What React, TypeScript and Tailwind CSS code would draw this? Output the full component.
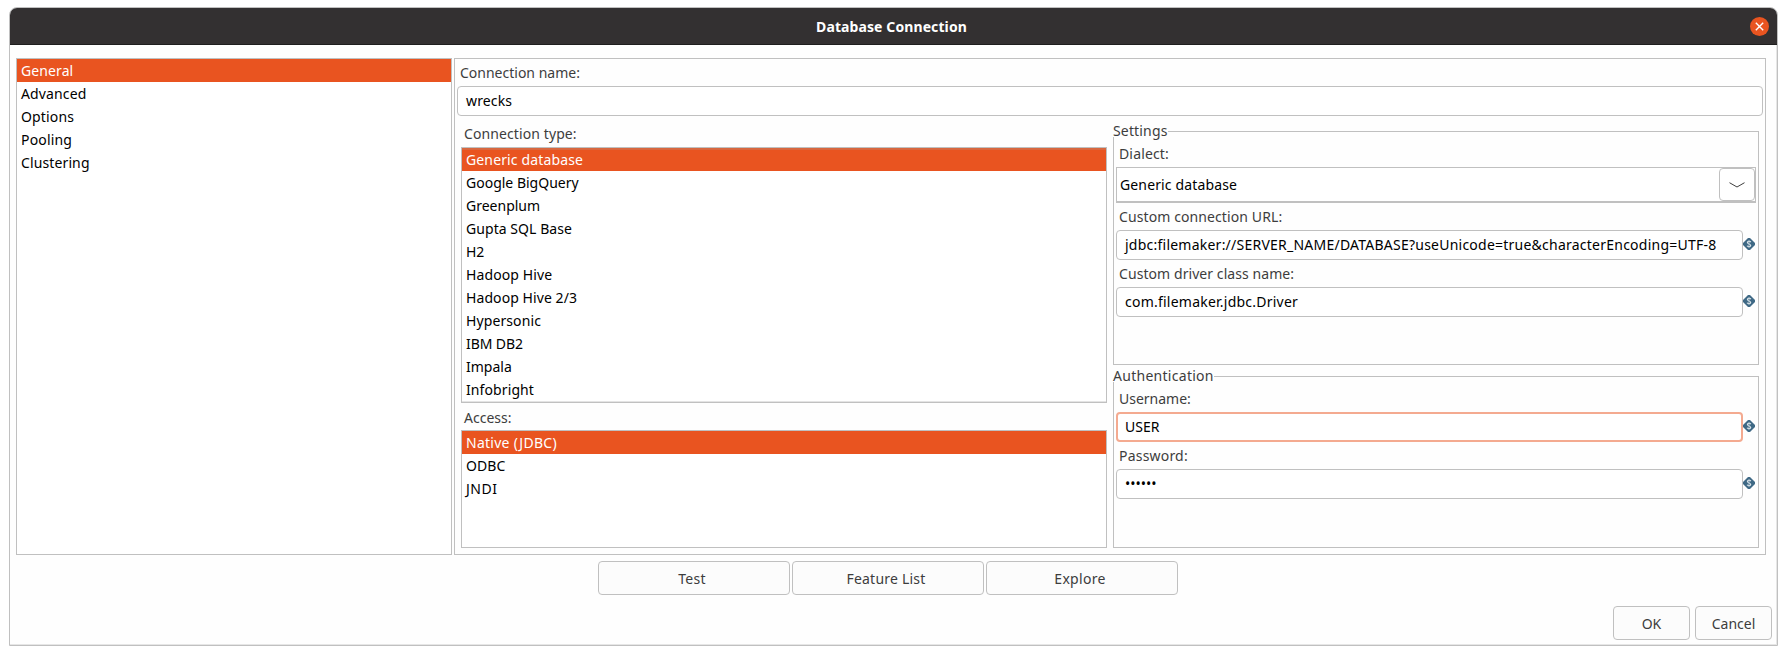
import React from "react";
import { clsx } from "clsx";

const databases: [string, string][] = [
  ["Generic database", "tracking-[0.14px]"],
  ["Google BigQuery", ""],
  ["Greenplum", ""],
  ["Gupta SQL Base", "tracking-[0.06px]"],
  ["H2", ""],
  ["Hadoop Hive", "tracking-[0.1px]"],
  ["Hadoop Hive 2/3", "tracking-[0.08px]"],
  ["Hypersonic", "tracking-[0.1px]"],
  ["IBM DB2", "tracking-[-0.1px]"],
  ["Impala", ""],
  ["Infobright", "tracking-[0.1px]"],
];
const sections: [string, string][] = [
  ["General", "tracking-[0.1px]"],
  ["Advanced", "tracking-[0.14px]"],
  ["Options", "tracking-[0.16px]"],
  ["Pooling", "tracking-[0.16px]"],
  ["Clustering", "tracking-[0.12px]"],
];
const access: [string, string][] = [
  ["Native (JDBC)", "tracking-[0.26px]"],
  ["ODBC", "tracking-[0.1px]"],
  ["JNDI", "tracking-[0.5px]"],
];

function List({ items, className, overflow }: { items: [string, string][]; className: string; overflow?: boolean }) {
  return (
    <ul className={clsx("border border-[#c0c0c0] bg-white", className)}>
      {items.map(([name, tracking], i) => (
        <li
          key={name}
          className={clsx(
            "h-[23px] pl-1 leading-[23px]",
            tracking,
            i === 0 ? "bg-[#e95420] text-white" : "text-black",
            i === 0 && overflow && "shadow-[inset_0_2px_0_#d8673f]",
          )}
        >
          {name}
        </li>
      ))}
      {overflow && <li className="h-px bg-[#e4e4e4]" />}
    </ul>
  );
}

function Label({ children, className }: { children: string; className?: string }) {
  return <div className={clsx("h-[22px] leading-[22px]", className)}>{children}</div>;
}

function Variable() {
  return (
    <svg width="12" height="12" viewBox="0 0 12 12" className="mt-2 shrink-0">
      <path d="M5 0H7L12 5V7L7 12H5L0 7V5Z" fill="#3f6985" />
      <path d="M7.8 4.1C7.2 3.2 4.4 3.1 4.4 4.6S7.7 5.9 7.7 7.4 4.6 8.8 4.1 7.8" fill="none" stroke="#dbe4ea" strokeWidth="1.2" />
      <path d="M6 2V10" stroke="#b4c5d0" strokeWidth="0.8" />
    </svg>
  );
}

function Field({ value, tracking, focused }: { value: string; tracking?: string; focused?: boolean }) {
  return (
    <div className="flex">
      <div
        className={clsx(
          "h-[30px] w-[627px] rounded-[4px] bg-white text-black",
          focused ? "border-2 border-[#f4aa90] pl-[7px] leading-[26px]" : "border border-[#c0c0c0] pl-2 leading-[28px]",
          tracking,
        )}
      >
        {value}
      </div>
      <Variable />
    </div>
  );
}

function Group({
  title,
  tracking,
  className,
  children,
}: {
  title: string;
  tracking: string;
  className: string;
  children: React.ReactNode;
}) {
  return (
    <section className={clsx("flex flex-col", className)}>
      <div className="flex h-[11px] items-center">
        <h2 className={clsx("pb-[2px] leading-[11px]", tracking)}>{title}</h2>
        <div className="h-px flex-1 bg-[#c0c0c0]" />
        <div className="h-[6px] w-px self-end bg-[#c0c0c0]" />
      </div>
      <div className="flex-1 border border-t-0 border-[#c0c0c0] pl-[2px]">{children}</div>
    </section>
  );
}

function Button({ children, className }: { children: string; className: string }) {
  return (
    <button className={clsx("h-[34px] rounded-[4px] border border-[#c0c0c0] bg-[#fcfcfc]", className)}>{children}</button>
  );
}

export default function App() {
  return (
    <div className="h-[655px] w-[1787px] bg-white pt-[7px] pl-[9px] font-['Noto_Sans','Open_Sans',sans-serif] text-[14px] whitespace-nowrap text-[#3d3d3d]">
      <main className="flex h-[639px] w-[1769px] flex-col rounded-t-[8px] border border-[#c0c0c0] bg-[#fefefe] shadow-[inset_-1px_-1px_0_#e6e6e6]">
        <header className="flex h-[37px] items-center rounded-t-[7px] border-b border-[#1f1e1e] bg-[#333031] pl-[23px] pr-[8px]">
          <h1 className="flex-1 text-center text-[14px] font-bold tracking-[0.1px] text-white">Database Connection</h1>
          <button className="flex size-[19px] items-center justify-center rounded-full bg-[#e95420]" aria-label="Close">
            <svg width="9" height="9" viewBox="0 0 9 9">
              <path d="M.8.8 8.2 8.2M8.2.8.8 8.2" stroke="#fff" strokeWidth="1.4" />
            </svg>
          </button>
        </header>
        <div className="flex gap-[2px] pt-[13px] pl-[6px]">
          <List items={sections} className="h-[497px] w-[436px]" />
          <div className="h-[497px] w-[1312px] border border-[#c0c0c0]">
            <Label className="mt-[3px] pl-[5px]">Connection name:</Label>
            <div className="mt-[2px] ml-[2px] h-[30px] w-[1306px] rounded-[4px] border border-[#c0c0c0] bg-white pl-2 leading-[28px] tracking-[0.15px] text-black">
              wrecks
            </div>
            <div className="flex gap-[6px] pl-[6px]">
              <div className="w-[646px] pt-[7px]">
                <Label className="pl-[3px] tracking-[0.1px]">Connection type:</Label>
                <List items={databases} className="mt-[2px] h-[256px]" overflow />
                <Label className="mt-1 pl-[3px]">Access:</Label>
                <List items={access} className="mt-px h-[118px]" />
              </div>
              <div className="w-[646px] pt-[10px]">
                <Group title="Settings" tracking="tracking-[0.16px]" className="h-[239px]">
                  <Label className="mt-[6px] pl-[3px] tracking-[0.15px]">Dialect:</Label>
                  <div className="mt-[2px] flex h-[36px] w-[640px] border border-b-2 border-[#c0c0c0] bg-white pl-[3px] leading-[33px] text-black">
                    <span className="flex-1 tracking-[0.14px]">Generic database</span>
                    <div className="flex h-[33px] w-[36px] items-center justify-center rounded-[4px] border border-[#c0c0c0]">
                      <svg width="16" height="6" viewBox="0 0 16 6">
                        <path d="M.5.7 8 5 15.5.7" fill="none" stroke="#3d3d3d" strokeWidth="1" />
                      </svg>
                    </div>
                  </div>
                  <Label className="mt-[3px] pl-[3px] tracking-[0.1px]">Custom connection URL:</Label>
                  <div className="mt-[2px]">
                    <Field
                      value="jdbc:filemaker://SERVER_NAME/DATABASE?useUnicode=true&characterEncoding=UTF-8"
                      tracking="tracking-[0.235px]"
                    />
                  </div>
                  <Label className="mt-[3px] pl-[3px] tracking-[0.07px]">Custom driver class name:</Label>
                  <div className="mt-[2px]">
                    <Field value="com.filemaker.jdbc.Driver" tracking="tracking-[0.23px]" />
                  </div>
                </Group>
                <Group title="Authentication" tracking="tracking-[0.28px]" className="mt-[6px] h-[177px]">
                  <Label className="mt-[6px] pl-[3px]">Username:</Label>
                  <div className="mt-[2px]">
                    <Field value="USER" focused />
                  </div>
                  <Label className="mt-[3px] pl-[3px] tracking-[0.2px]">Password:</Label>
                  <div className="mt-[2px]">
                    <Field value="••••••" />
                  </div>
                </Group>
              </div>
            </div>
          </div>
        </div>
        <div className="flex gap-[2px] pt-[6px] pl-[588px]">
          <Button className="w-[192px] pr-[4px] tracking-[0.25px]">Test</Button>
          <Button className="w-[192px] pr-[4px] tracking-[0.22px]">Feature List</Button>
          <Button className="w-[192px] pr-[4px] tracking-[0.3px]">Explore</Button>
        </div>
        <div className="flex justify-end gap-[5px] pt-[11px] pr-[5px]">
          <Button className="w-[77px]">OK</Button>
          <Button className="w-[77px]">Cancel</Button>
        </div>
      </main>
    </div>
  );
}
